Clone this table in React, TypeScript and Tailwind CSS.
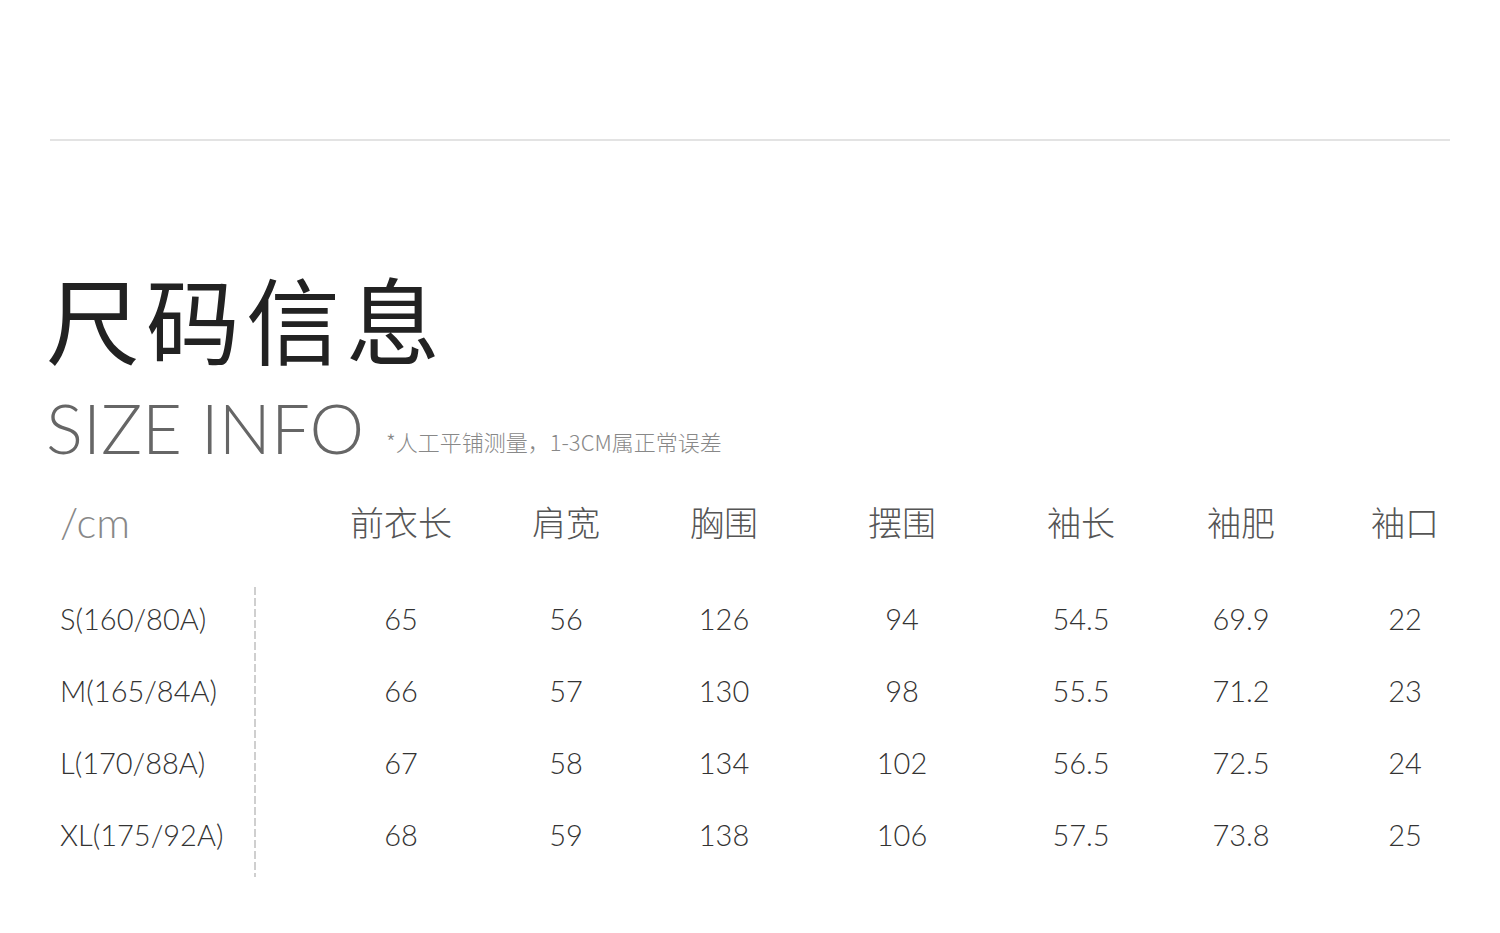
import React from 'react';

const headers = ['前衣长', '肩宽', '胸围', '摆围', '袖长', '袖肥', '袖口'];
const colWidths = ['w-[162px]', 'w-[168px]', 'w-[148px]', 'w-[208px]', 'w-[150px]', 'w-[170px]', 'w-[158px]'];

const rows = [
  { size: 'S(160/80A)', values: ['65', '56', '126', '94', '54.5', '69.9', '22'] },
  { size: 'M(165/84A)', values: ['66', '57', '130', '98', '55.5', '71.2', '23'] },
  { size: 'L(170/88A)', values: ['67', '58', '134', '102', '56.5', '72.5', '24'] },
  { size: 'XL(175/92A)', values: ['68', '59', '138', '106', '57.5', '73.8', '25'] },
];

const latin = "font-['Lato','Noto_Sans_CJK_SC',sans-serif]";
const cjk = "font-['Noto_Sans_CJK_SC',sans-serif]";

export default function App() {
  return (
    <div className="w-[1500px] h-[933px] bg-white overflow-hidden">
      <div className="pt-[139px] px-[50px]">
        <div className="h-[2px] bg-[#e3e3e3]" />
      </div>

      {/* Title */}
      <div className="pl-[46px] pt-[129px]">
        <h1 className={`${cjk} text-[94px] leading-none tracking-[6px] text-[#222] font-normal`}>尺码信息</h1>
        <div className="flex items-end mt-[29px]">
          <span className={`${latin} font-light text-[69px] leading-none text-[#666]`}>SIZE INFO</span>
          <span className={`${cjk} font-light text-[22px] leading-none text-[#888] ml-[22px] mb-[10px]`}>*人工平铺测量，1-3CM属正常误差</span>
        </div>
      </div>

      {/* Table */}
      <div className="pl-[60px] mt-[35px]">
        <div className="flex items-center h-[50px]">
          <div className={`${latin} font-light w-[260px] text-[42px] text-[#888] leading-none`}>/cm</div>
          {headers.map((h, i) => (
            <div key={h} className={`${colWidths[i]} ${cjk} font-light text-[34px] text-[#555] text-center leading-none`}>
              {h}
            </div>
          ))}
        </div>

        <div className="flex mt-[36px]">
          <div className="w-[194px]">
            {rows.map((r) => (
              <div key={r.size} className={`${latin} h-[72px] flex items-center text-[29px] text-[#333] font-light`}>
                {r.size}
              </div>
            ))}
          </div>
          <div className="w-[2px] mt-[4px] h-[290px] bg-[repeating-linear-gradient(to_bottom,#cfcfcf_0_8px,transparent_8px_11px)]" />
          <div className="pl-[64px]">
            {rows.map((r) => (
              <div key={r.size} className="flex h-[72px] items-center">
                {r.values.map((v, i) => (
                  <div key={i} className={`${colWidths[i]} ${latin} font-light text-[29px] text-[#333] text-center`}>
                    {v}
                  </div>
                ))}
              </div>
            ))}
          </div>
        </div>
      </div>
    </div>
  );
}
